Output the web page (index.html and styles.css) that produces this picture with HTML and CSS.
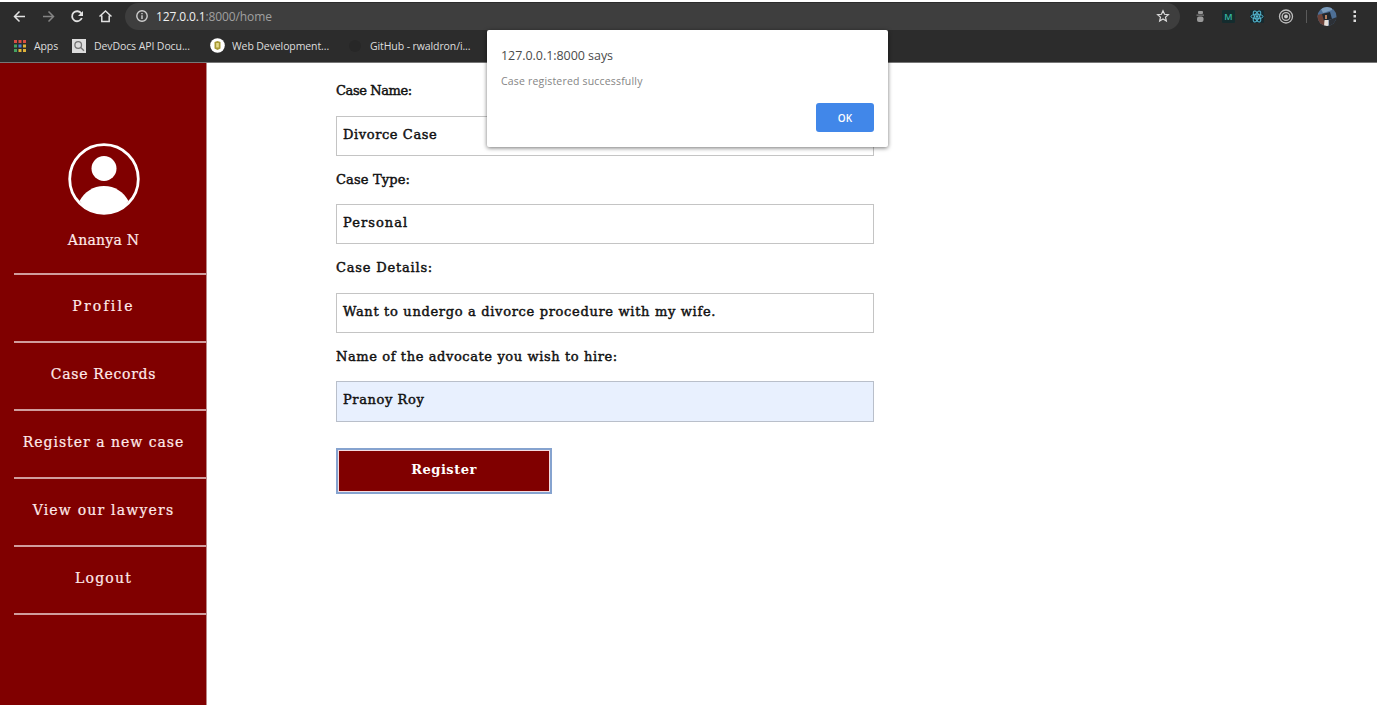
FILE: index.html
```html
<!DOCTYPE html>
<html lang="en">
<head>
<meta charset="utf-8">
<title>Register a case</title>
<link rel="stylesheet" href="styles.css">
</head>
<body>
<header class="browser">
  <div class="toolbar">
    <svg class="nav-icons" width="125" height="28" viewBox="0 0 125 28" fill="none" stroke="#e2e2e2" stroke-width="1.5">
      <path d="M25 14.5H14.5M19.5 9.5l-5 5 5 5"/>
      <path stroke="#858585" d="M43 14.500H53.500M48.500 9.500l5 5-5 5"/>
      <path stroke-width="1.8" d="M81.300 11.500A5 5 0 1 0 81.800 16"/><path fill="#e2e2e2" stroke="none" d="M83 9v5h-5z"/>
      <path d="M99.500 14.500l6-5.500 6 5.500M101.800 13.500v6h7.400v-6"/>
    </svg>
    <div class="omnibox">
      <svg width="14" height="14" viewBox="0 0 14 14" fill="none" stroke="#cfcfcf" stroke-width="1.4"><circle cx="7" cy="7" r="5.200"/><path d="M7 6.300v3.600M7 3.900v1.300"/></svg>
      <span class="url"><b>127.0.0.1</b>:8000/home</span>
      <svg class="star" width="14" height="14" viewBox="0 0 14 14" fill="none" stroke="#dcdcdc" stroke-width="1.200"><path d="M7 1.700l1.550 3.550 3.850.35-2.900 2.550.85 3.800L7 9.950l-3.350 2 .85-3.800L1.600 5.600l3.850-.35z"/></svg>
    </div>
    <svg class="extensions" width="197" height="28" viewBox="0 0 197 28">
      <g fill="#999"><rect x="18" y="9" width="5" height="3" rx="1"/><path d="M16.500 12.500h7.500v1.300h-7.500z" fill="#777"/><rect x="17" y="14.500" width="6.500" height="5.500" rx="2"/></g>
      <rect x="42" y="8" width="13" height="13" rx="1" fill="#142c2e"/><text x="48.500" y="18" class="ext-letter">M</text>
      <rect x="70" y="8" width="14" height="13" rx="1" fill="#17292e"/>
      <g fill="none" stroke="#54b8d2" stroke-width="1"><ellipse cx="77" cy="14.500" rx="6" ry="2.300"/><ellipse cx="77" cy="14.500" rx="6" ry="2.300" transform="rotate(60 77 14.500)"/><ellipse cx="77" cy="14.500" rx="6" ry="2.300" transform="rotate(120 77 14.500)"/></g><circle cx="77" cy="14.500" r="1.300" fill="#54b8d2"/>
      <g fill="none" stroke="#bdbdbd" stroke-width="1.300"><circle cx="106" cy="14.500" r="6.500"/><circle cx="106" cy="14.500" r="3.900"/></g><circle cx="106" cy="14.500" r="1.900" fill="#ccc"/>
      <path d="M126.500 8v13" stroke="#5a5a5a"/>
      <clipPath id="avatar"><circle cx="147" cy="14.500" r="9.500"/></clipPath>
      <g clip-path="url(#avatar)"><path fill="#4d6f96" d="M137 5h20v20h-20z"/><path fill="#7d9cbb" d="M140 5h12v3l-9 3z"/><path fill="#6b4238" d="M137 13l9-2 3 4-4 10h-8z"/><path fill="#202830" d="M142 12l8-2 2 7-8 2z"/><path fill="#b58060" d="M145 13h2v4h-2z"/><path fill="#e7dfd8" d="M144.500 18h4v7h-4.500z"/><path fill="#2c3036" d="M149 18l8-3v10h-8z"/></g>
      <g fill="#ddd"><rect x="173.500" y="8.500" width="2.500" height="2.500"/><rect x="173.500" y="13" width="2.500" height="2.500"/><rect x="173.500" y="17.500" width="2.500" height="2.500"/></g>
    </svg>
  </div>
  <nav class="bookmarks">
    <a class="bookmark apps">
      <svg width="14" height="14" viewBox="0 0 14 14"><g fill="#d94d42"><path d="M1 1h3v3H1zM5.500 1h3v3h-3zM10 1h3v3h-3z"/></g><path fill="#44a362" d="M1 5.500h3v3H1zM1 10h3v3H1z"/><path fill="#4c83d6" d="M5.500 5.500h3v3h-3z"/><path fill="#dfb33a" d="M10 5.500h3v3h-3zM5.500 10h3v3h-3zM10 10h3v3h-3z"/></svg>
      <span>Apps</span></a>
    <a class="bookmark devdocs">
      <svg width="14" height="14" viewBox="0 0 14 14"><rect width="14" height="14" fill="#ddd"/><g fill="none" stroke="#747474" stroke-width="1.300"><circle cx="6.200" cy="6" r="3.300"/><path d="M8.700 8.500l3.300 3.300"/></g></svg>
      <span>DevDocs API Docu...</span></a>
    <a class="bookmark webdev">
      <svg width="15" height="15" viewBox="0 0 15 15"><circle cx="7.500" cy="7.500" r="7.300" fill="#fff"/><path d="M4.500 4l3-1 3 1v6.500l-3 1.500-3-1.500z" fill="#a89a35"/><path d="M6.200 5h2.600v4.500H6.200z" fill="#e5db8a"/></svg>
      <span>Web Development...</span></a>
    <a class="bookmark github">
      <svg width="14" height="14" viewBox="0 0 14 14"><circle cx="7" cy="7" r="6" fill="#272727"/></svg>
      <span>GitHub - rwaldron/i...</span></a>
  </nav>
</header>
<div class="page">
  <aside class="sidebar">
    <svg class="avatar" width="72" height="72" viewBox="0 0 72 72"><circle cx="36" cy="36" r="34.300" fill="none" stroke="#fff" stroke-width="2.800"/><circle cx="36" cy="25.500" r="12.500" fill="#fff"/><path fill="#fff" d="M11.500 58C16.500 49 25 43 36 43s19.500 6 24.500 15C54.500 66 46 71 36 71S17.500 66 11.500 58z"/></svg>
    <div class="item user"><span>Ananya N</span></div>
    <a class="item profile"><span>Profile</span></a>
    <a class="item records"><span>Case Records</span></a>
    <a class="item new-case"><span>Register a new case</span></a>
    <a class="item lawyers"><span>View our lawyers</span></a>
    <a class="item logout"><span>Logout</span></a>
  </aside>
  <main class="form">
    <label class="label name-label">Case Name:</label>
    <div class="field">Divorce Case</div>
    <label class="label type-label">Case Type:</label>
    <div class="field type-field">Personal</div>
    <label class="label details-label">Case Details:</label>
    <div class="field details-field">Want to undergo a divorce procedure with my wife.</div>
    <label class="label">Name of the advocate you wish to hire:</label>
    <div class="field filled">Pranoy Roy</div>
    <button class="register">Register</button>
  </main>
</div>
<div class="dialog" role="alertdialog">
  <div class="dialog-title">127.0.0.1:8000 says</div>
  <div class="dialog-text">Case registered successfully</div>
  <button class="ok">OK</button>
</div>
</body>
</html>
```

FILE: styles.css
```css
* { box-sizing: border-box; }
body { margin: 0; padding-top: 2px; height: 705px; overflow: hidden; background: #fff; font-family: "Open Sans", "Noto Sans", sans-serif; }
svg { display: block; flex: none; }
.browser { height: 61px; background: #2c2c2c; border-bottom: 1px solid #777; }
.toolbar { display: flex; height: 28px; }
.omnibox { display: flex; align-items: center; flex: 1; height: 27px; margin-top: 1px; padding: 0 10px 1px; border-radius: 14px; background: #3e3e3e; }
.url { margin-left: 7px; font-size: 12px; letter-spacing: -.12px; color: #a0a0a0; }
.url b { font-weight: 400; color: #f0f0f0; }
.star { margin-left: auto; }
.ext-letter { font: 600 9px "Open Sans", sans-serif; fill: #35b8a4; text-anchor: middle; }
.bookmarks { display: flex; align-items: center; height: 31px; padding-left: 13px; color: #dedede; font-size: 10.500px; letter-spacing: -.1px; }
.bookmark { display: flex; align-items: center; white-space: nowrap; }
.apps { width: 59px; gap: 7px; }
.devdocs { width: 138px; gap: 8px; }
.webdev { width: 138px; gap: 7px; }
.github { gap: 8px; }
.page { display: flex; height: 642px; }
.sidebar { display: flex; flex-direction: column; width: 207px; padding: 80px 0 0 14px; background: #800000; border-right: 1px solid #b88; color: #ffeaea; font: 14px "DejaVu Serif", serif; font-variant-ligatures: none; -webkit-text-stroke: .2px #ffeaea; }
.avatar { margin-left: 54px; }
.item { display: flex; justify-content: center; height: 68px; padding: 20px 13px 0 0; line-height: 22px; border-bottom: 2px solid #d09d9d; white-space: nowrap; }
.user { height: 60px; padding-top: 14px; letter-spacing: .25px; }
.profile { letter-spacing: 2.200px; }
.records { letter-spacing: .7px; }
.new-case { letter-spacing: 1px; }
.lawyers { letter-spacing: 1.200px; }
.logout { letter-spacing: 1.200px; }
.form { display: flex; flex-direction: column; width: 667px; padding: 16px 0 0 129px; color: #111; font: 13px "DejaVu Serif", serif; letter-spacing: .6px; font-variant-ligatures: none; -webkit-text-stroke: .45px #111; }
.label { height: 22px; line-height: 23px; margin-bottom: 14.500px; white-space: nowrap; }
.field { height: 40.300px; margin-bottom: 11.800px; padding: 0 6px 2px; border: 1px solid #c4c4c4; line-height: 36px; white-space: nowrap; }
.name-label { letter-spacing: -.4px; }
.type-label { letter-spacing: .15px; }
.details-label { letter-spacing: .8px; }
.type-field { letter-spacing: 1.050px; }
.details-field { letter-spacing: .68px; }
.filled { background: #e8f0fe; border-color: #b9bfca; }
.register { width: 216px; height: 46px; margin-top: 15px; padding: 0 0 4px; border: 2px solid #86a3cf; outline: 1px solid #f5dce0; outline-offset: -3px; background: #800000; color: #fff; font: 700 13px "DejaVu Serif", serif; letter-spacing: .5px; -webkit-text-stroke: 0; }
.dialog { position: absolute; left: 487px; top: 30px; display: flex; flex-direction: column; width: 401px; height: 117px; padding: 16px 14px 0 14px; background: #fff; border-radius: 2px; box-shadow: 0 1px 4px rgba(0,0,0,.55); }
.dialog-title { height: 20px; line-height: 20px; font-size: 12.500px; letter-spacing: -.05px; color: #4b4b4b; }
.dialog-text { height: 20px; margin-top: 5px; line-height: 20px; font-size: 10.500px; letter-spacing: .18px; color: #858585; }
.ok { align-self: flex-end; width: 58px; height: 29px; margin-top: 12px; padding: 0; border: 0; border-radius: 3px; background: #4187e9; color: #fff; font: 600 10px "Open Sans", sans-serif; }
```
